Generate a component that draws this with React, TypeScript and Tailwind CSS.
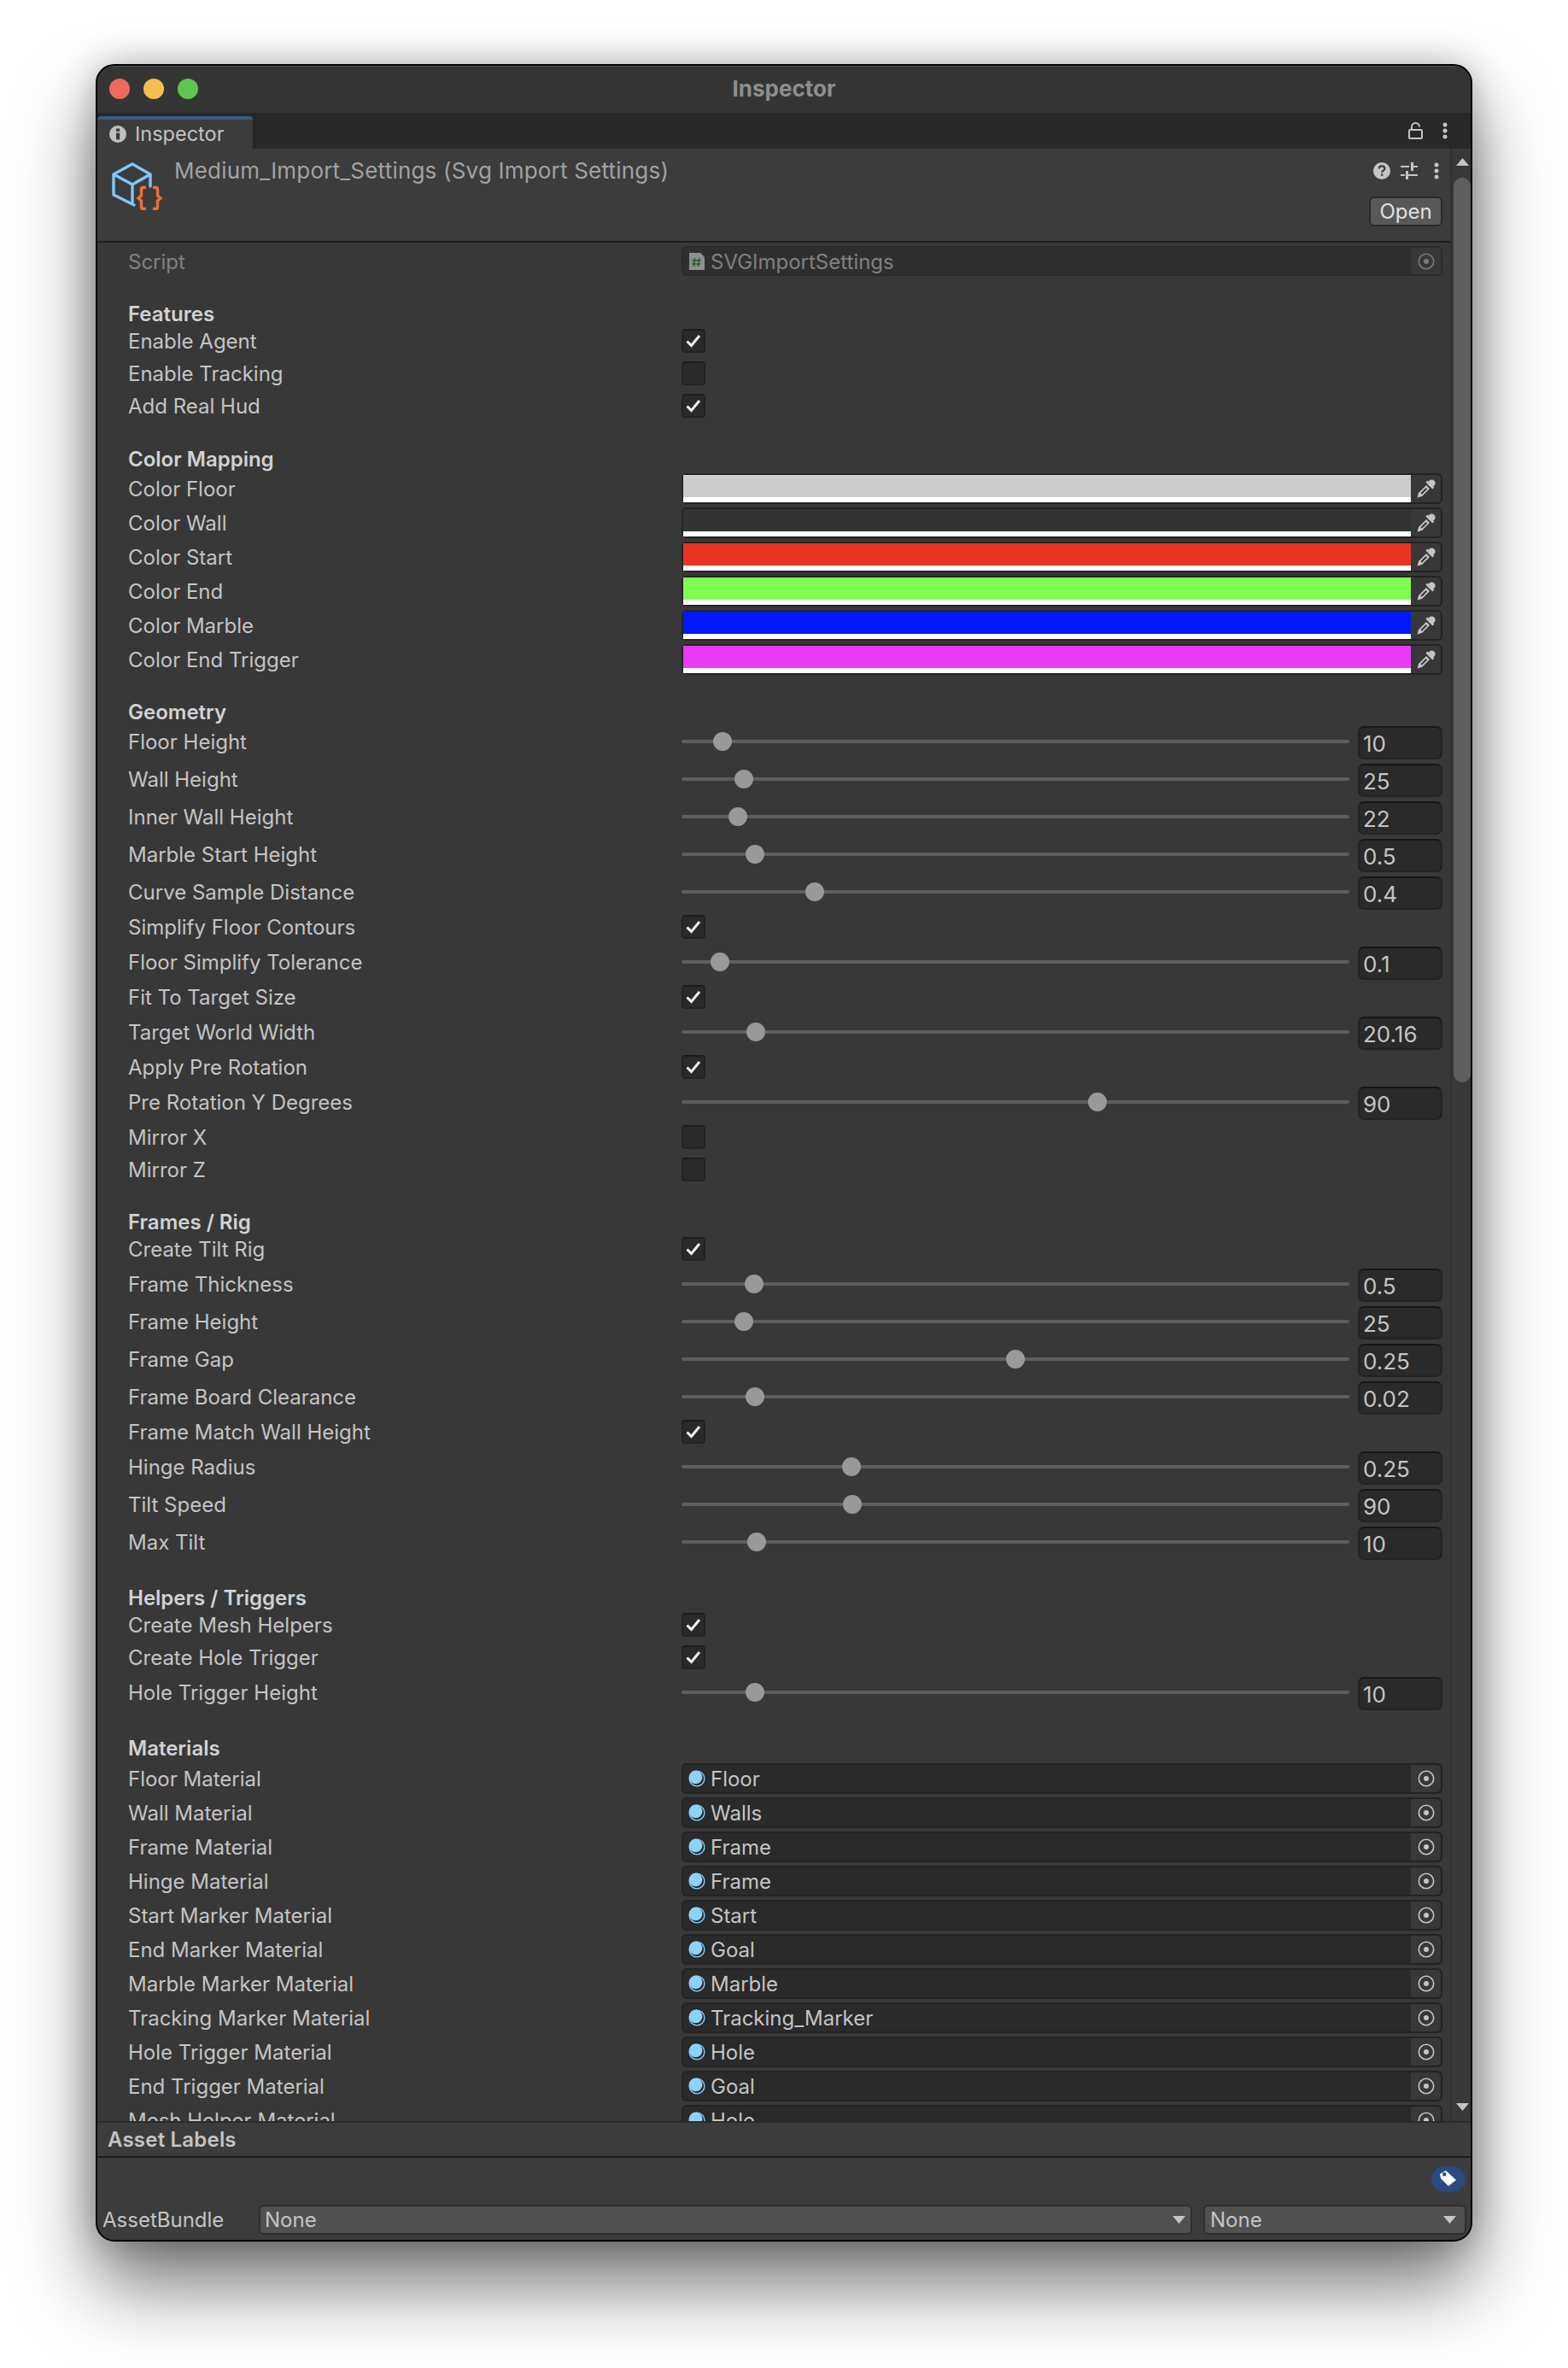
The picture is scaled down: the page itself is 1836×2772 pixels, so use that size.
import React from 'react';

type Row =
  | { kind: 'check'; label: string; on: boolean }
  | { kind: 'color'; label: string; color: string }
  | { kind: 'slider'; label: string; value: string; pos: number }
  | { kind: 'object'; label: string; value: string };

type Section = { title: string; className: string; headClassName: string; rows: Row[] };

const sections: Section[] = [
  {
    title: 'Features',
    className: 'mt-[31px]',
    headClassName: 'mb-0',
    rows: [
      { kind: 'check', label: 'Enable Agent', on: true },
      { kind: 'check', label: 'Enable Tracking', on: false },
      { kind: 'check', label: 'Add Real Hud', on: true },
    ],
  },
  {
    title: 'Color Mapping',
    className: 'mt-[30px]',
    headClassName: 'mb-[2px]',
    rows: [
      { kind: 'color', label: 'Color Floor', color: '#cbcbcb' },
      { kind: 'color', label: 'Color Wall', color: '#333333' },
      { kind: 'color', label: 'Color Start', color: '#e93323' },
      { kind: 'color', label: 'Color End', color: '#7efc4f' },
      { kind: 'color', label: 'Color Marble', color: '#0419fb' },
      { kind: 'color', label: 'Color End Trigger', color: '#e93af6' },
    ],
  },
  {
    title: 'Geometry',
    className: 'mt-[28px]',
    headClassName: 'mb-0',
    rows: [
      { kind: 'slider', label: 'Floor Height', value: '10', pos: 48 },
      { kind: 'slider', label: 'Wall Height', value: '25', pos: 73 },
      { kind: 'slider', label: 'Inner Wall Height', value: '22', pos: 66 },
      { kind: 'slider', label: 'Marble Start Height', value: '0.5', pos: 86 },
      { kind: 'slider', label: 'Curve Sample Distance', value: '0.4', pos: 156 },
      { kind: 'check', label: 'Simplify Floor Contours', on: true },
      { kind: 'slider', label: 'Floor Simplify Tolerance', value: '0.1', pos: 45 },
      { kind: 'check', label: 'Fit To Target Size', on: true },
      { kind: 'slider', label: 'Target World Width', value: '20.16', pos: 87 },
      { kind: 'check', label: 'Apply Pre Rotation', on: true },
      { kind: 'slider', label: 'Pre Rotation Y Degrees', value: '90', pos: 487 },
      { kind: 'check', label: 'Mirror X', on: false },
      { kind: 'check', label: 'Mirror Z', on: false },
    ],
  },
  {
    title: 'Frames / Rig',
    className: 'mt-[29px]',
    headClassName: 'mb-0',
    rows: [
      { kind: 'check', label: 'Create Tilt Rig', on: true },
      { kind: 'slider', label: 'Frame Thickness', value: '0.5', pos: 85 },
      { kind: 'slider', label: 'Frame Height', value: '25', pos: 73 },
      { kind: 'slider', label: 'Frame Gap', value: '0.25', pos: 391 },
      { kind: 'slider', label: 'Frame Board Clearance', value: '0.02', pos: 86 },
      { kind: 'check', label: 'Frame Match Wall Height', on: true },
      { kind: 'slider', label: 'Hinge Radius', value: '0.25', pos: 199 },
      { kind: 'slider', label: 'Tilt Speed', value: '90', pos: 200 },
      { kind: 'slider', label: 'Max Tilt', value: '10', pos: 88 },
    ],
  },
  {
    title: 'Helpers / Triggers',
    className: 'mt-[30px]',
    headClassName: 'mb-0',
    rows: [
      { kind: 'check', label: 'Create Mesh Helpers', on: true },
      { kind: 'check', label: 'Create Hole Trigger', on: true },
      { kind: 'slider', label: 'Hole Trigger Height', value: '10', pos: 86 },
    ],
  },
  {
    title: 'Materials',
    className: 'mt-[30px]',
    headClassName: 'mb-[3px]',
    rows: [
      { kind: 'object', label: 'Floor Material', value: 'Floor' },
      { kind: 'object', label: 'Wall Material', value: 'Walls' },
      { kind: 'object', label: 'Frame Material', value: 'Frame' },
      { kind: 'object', label: 'Hinge Material', value: 'Frame' },
      { kind: 'object', label: 'Start Marker Material', value: 'Start' },
      { kind: 'object', label: 'End Marker Material', value: 'Goal' },
      { kind: 'object', label: 'Marble Marker Material', value: 'Marble' },
      { kind: 'object', label: 'Tracking Marker Material', value: 'Tracking_Marker' },
      { kind: 'object', label: 'Hole Trigger Material', value: 'Hole' },
      { kind: 'object', label: 'End Trigger Material', value: 'Goal' },
      { kind: 'object', label: 'Mesh Helper Material', value: 'Hole' },
    ],
  },
];

const Dots = () => (
  <svg width="8" height="20" viewBox="0 0 8 20" fill="#c4c4c4">
    <circle cx="4" cy="3" r="2.5" />
    <circle cx="4" cy="10" r="2.5" />
    <circle cx="4" cy="17" r="2.5" />
  </svg>
);

const Target = ({ dim }: { dim?: boolean }) => (
  <svg width="20" height="20" viewBox="0 0 20 20" fill="none">
    <circle cx="10" cy="10" r="8.7" stroke={dim ? '#7a7a7a' : '#c4c4c4'} strokeWidth="1.6" />
    <circle cx="10" cy="10" r="3" fill={dim ? '#7a7a7a' : '#c4c4c4'} />
  </svg>
);

const MaterialIcon = () => (
  <svg width="20" height="20" viewBox="0 0 20 20" fill="none" className="shrink-0">
    <circle cx="10" cy="10" r="8.9" stroke="#8bd2ff" strokeWidth="1.3" />
    <circle cx="8.6" cy="8.4" r="7.8" fill="#8bd2ff" />
  </svg>
);

const Eyedropper = () => (
  <svg width="22" height="22" viewBox="0 0 22 22" fill="#c4c4c4">
    <circle cx="17.4" cy="4.6" r="4.2" />
    <path d="M10.4 3.6 12.4 1.6 20.4 9.6 18.4 11.6Z" />
    <path
      d="M11 7 15 11 6 20 .6 21.6 2 16ZM10.6 10 4.4 16.2 5.9 17.7 12.1 11.5Z"
      fillRule="evenodd"
    />
  </svg>
);

const Caret = () => (
  <svg width="15" height="9" viewBox="0 0 15 9" fill="#c4c4c4">
    <path d="M0 0h15L7.5 9Z" />
  </svg>
);

function Field({ row }: { row: Row }) {
  if (row.kind === 'check') {
    return (
      <div className="flex h-[28px] w-[28px] items-center justify-center rounded-[4px] border-2 border-[#232323] border-t-[#1c1c1c] bg-[#2a2a2a]">
        {row.on && (
          <svg width="18" height="16" viewBox="0 0 18 16" fill="none">
            <path d="M1.5 8.5 6.5 13.5 16 2" stroke="#f0f0f0" strokeWidth="3" />
          </svg>
        )}
      </div>
    );
  }
  if (row.kind === 'color') {
    return (
      <div className="flex h-[36px] items-stretch rounded-[6px] border-2 border-[#232323] bg-[#383838]">
        <div className="flex w-[852px] flex-col">
          <div className="h-[26px]" style={{ backgroundColor: row.color }} />
          <div className="h-[6px] bg-white" />
        </div>
        <div className="flex flex-1 items-center justify-center pl-[1px]">
          <Eyedropper />
        </div>
      </div>
    );
  }
  if (row.kind === 'slider') {
    return (
      <div className="flex items-center">
        <div className="relative h-[4px] w-[782px] rounded-full bg-[#5e5e5e]">
          <div
            className="absolute top-[-9px] h-[22px] w-[22px] -translate-x-1/2 rounded-full bg-[#999999]"
            style={{ left: row.pos }}
          />
        </div>
        <div className="mt-[2px] ml-[10px] flex h-[39px] w-[99px] items-center rounded-[7px] border-2 border-[#232323] border-t-[#171717] bg-[#2a2a2a] pt-[3px] pl-[4px] text-[26px]">
          {row.value}
        </div>
      </div>
    );
  }
  return (
    <div className="flex h-[36px] items-stretch rounded-[6px] border-2 border-[#232323] bg-[#2a2a2a]">
      <div className="flex flex-1 items-center gap-[6px] pl-[6px]">
        <MaterialIcon />
        <span className="pt-[2px]">{row.value}</span>
      </div>
      <div className="flex w-[35px] items-center justify-center rounded-r-[5px] bg-[#383838]">
        <Target />
      </div>
    </div>
  );
}

export default function App() {
  return (
    <div className="h-[2772px] w-[1836px] bg-white pt-[75px] pl-[112px] font-['Inter',sans-serif] text-[24px] leading-none text-[#c4c4c4]">
      <div className="flex h-[2549px] w-[1612px] flex-col overflow-hidden rounded-[22px] border-2 border-black bg-[#383838] shadow-[0_50px_90px_rgba(0,0,0,0.55),0_0_40px_rgba(0,0,0,0.25)]">
        {/* Title bar */}
        <div className="relative flex h-[55px] shrink-0 items-center justify-center border-t border-[#555555] bg-[#353535] pb-[3px]">
          <div className="absolute top-[14px] left-[14px] flex gap-[16px]">
            <div className="h-[24px] w-[24px] rounded-full bg-[#ec6a5e]" />
            <div className="h-[24px] w-[24px] rounded-full bg-[#f4bf4f]" />
            <div className="h-[24px] w-[24px] rounded-full bg-[#61c554]" />
          </div>
          <span className="text-[26px] font-bold text-[#8e8e8e]">Inspector</span>
        </div>

        {/* Tab strip */}
        <div className="flex h-[42px] shrink-0 items-stretch justify-between bg-[#282828]">
          <div className="mt-[4px] flex w-[182px] items-center gap-[10px] rounded-t-[4px] border-t-4 border-[#3a5a85] bg-[#3c3c3c] pl-[14px] text-[23.5px]">
            <svg width="20" height="20" viewBox="0 0 20 20">
              <circle cx="10" cy="10" r="10" fill="#c0c0c0" />
              <rect x="8" y="8.5" width="4.2" height="8" fill="#3c3c3c" />
              <rect x="8" y="3.5" width="4.2" height="3.4" fill="#3c3c3c" />
            </svg>
            <span>Inspector</span>
          </div>
          <div className="flex items-center gap-[21px] pr-[26px]">
            <svg width="18" height="20" viewBox="0 0 18 20" fill="none" stroke="#c4c4c4" strokeWidth="2">
              <rect x="1" y="9" width="15" height="10" rx="1" />
              <path d="M4 9V5.5a4.5 4.5 0 0 1 9 0" />
            </svg>
            <Dots />
          </div>
        </div>

        <div className="flex min-h-0 flex-1">
          {/* Scrolling inspector */}
          <div className="flex min-w-0 flex-1 flex-col overflow-hidden">
            <div className="relative h-[110px] shrink-0 border-b-2 border-[#1f1f1f] bg-[#3c3c3c]">
              <svg width="60" height="56" viewBox="0 0 60 56" fill="none" className="absolute top-[16px] left-[17px]">
                <path
                  d="M24 2 45 14V28M24 2 2 14V38L26 50M2 14 24 26 45 14M24 26V47"
                  stroke="#7fc8f8"
                  strokeWidth="3.4"
                  strokeLinejoin="round"
                  strokeLinecap="round"
                />
                <path
                  d="M40 29.5H37Q34.5 29.5 34.5 32V39L31 42 34.5 45V52Q34.5 54.5 37 54.5H40M48 29.5H51Q53.5 29.5 53.5 32V39L57 42 53.5 45V52Q53.5 54.5 51 54.5H48"
                  stroke="#ee6f3a"
                  strokeWidth="3.4"
                />
              </svg>
              <div className="absolute top-[13px] left-[90px] text-[26px] tracking-[0.2px] text-[#a2a2a2]">
                Medium_Import_Settings (Svg Import Settings)
              </div>
              <div className="absolute top-[16px] left-[1494px] flex items-center gap-[12px]">
                <svg width="20" height="20" viewBox="0 0 20 20">
                  <circle cx="10" cy="10" r="10" fill="#c4c4c4" />
                  <path
                    d="M6.7 7.6C6.7 5.5 8.2 4.4 10 4.4 11.9 4.4 13.3 5.5 13.3 7.2 13.3 9.6 10.2 9.6 10.2 12"
                    stroke="#3c3c3c"
                    strokeWidth="2.2"
                    fill="none"
                  />
                  <rect x="9" y="13.4" width="2.4" height="2.4" fill="#3c3c3c" />
                </svg>
                <svg width="20" height="20" viewBox="0 0 20 20" fill="#c4c4c4">
                  <rect x="0" y="4" width="10" height="2" />
                  <rect x="12" y="0" width="3" height="10" />
                  <rect x="15" y="4" width="5" height="2" />
                  <rect x="0" y="14" width="5" height="2" />
                  <rect x="6" y="10" width="3" height="10" />
                  <rect x="9" y="14" width="11" height="2" />
                </svg>
                <span className="ml-[6px]">
                  <Dots />
                </span>
              </div>
              <div className="absolute top-[56px] left-[1489px] flex h-[35px] w-[86px] items-center justify-center rounded-[6px] border-2 border-[#2a2a2a] bg-[#585858] pt-[1px] text-[#e0e0e0]">
                Open
              </div>
            </div>

            <div className="min-h-0 flex-1 overflow-hidden pr-[9px] pl-[36px]">
              {/* Script row */}
              <div className="mt-[4px] flex h-[35px] items-center text-[#808080]">
                <div className="w-[648px] pt-[2px]">Script</div>
                <div className="flex h-full flex-1 items-stretch rounded-[6px] border-2 border-[#2b2b2b] bg-[#2f2f2f]">
                  <div className="flex flex-1 items-center gap-[6px] pl-[6px]">
                    <svg width="20" height="20" viewBox="0 0 20 20">
                      <path d="M1 0h13l5 5v15H1Z" fill="#8f8f8f" />
                      <path d="M7.5 6 6.5 16M12.5 6 11.5 16M4.5 9H15M4 13H14.5" stroke="#2c5a2c" strokeWidth="1.6" />
                    </svg>
                    <span className="pt-[2px]">SVGImportSettings</span>
                  </div>
                  <div className="flex w-[35px] items-center justify-center bg-[#383838]">
                    <Target dim />
                  </div>
                </div>
              </div>

              {sections.map((s) => (
                <div key={s.title} className={s.className}>
                  <div className={`flex h-[26px] items-center pt-[1px] font-semibold text-[#d2d2d2] ${s.headClassName}`}>
                    {s.title}
                  </div>
                  {s.rows.map((r) => (
                    <div
                      key={r.label}
                      className={
                        r.kind === 'slider'
                          ? 'flex h-[44px] items-center'
                          : r.kind === 'check'
                            ? 'flex h-[38px] items-center'
                            : 'flex h-[40px] items-center'
                      }
                    >
                      <div className="w-[648px] shrink-0 pt-[2px]">{r.label}</div>
                      <div className="min-w-0 flex-1">
                        <Field row={r} />
                      </div>
                    </div>
                  ))}
                </div>
              ))}
            </div>
          </div>

          {/* Scrollbar */}
          <div className="flex w-[24px] shrink-0 flex-col items-center border-l-2 border-[#303030] bg-[#383838] pt-[11px] pb-[12px] pl-[2px]">
            <svg width="15" height="9" viewBox="0 0 15 9" fill="#c4c4c4">
              <path d="M7.5 0 15 9H0Z" />
            </svg>
            <div className="mt-[14px] h-[1059px] w-[20px] rounded-[10px] bg-[#5f5f5f]" />
            <div className="mt-auto">
              <Caret />
            </div>
          </div>
        </div>

        {/* Asset labels */}
        <div className="shrink-0 bg-[#3c3c3c] pb-[6px]">
          <div className="flex h-[43px] items-center border-y-2 border-t-[#2c2c2c] border-b-[#1f1f1f] pl-[12px] font-semibold tracking-[0.2px]">
            Asset Labels
          </div>
          <div className="flex h-[40px] items-center justify-end pt-[10px] pr-[6px]">
            <div className="flex h-[30px] w-[40px] items-center justify-center rounded-full bg-[#2b4a7f]">
              <svg width="20" height="20" viewBox="0 0 20 20">
                <path d="M0 4 7 0 19 11 10 18 1 9Z" fill="#fff" />
                <rect x="3.3" y="2.3" width="4" height="4" fill="#2b4a7f" />
              </svg>
            </div>
          </div>
          <div className="mt-[15px] flex h-[35px] items-center pr-[5px] pl-[6px]">
            <div className="w-[183px] shrink-0">AssetBundle</div>
            <div className="flex h-full w-[1093px] items-center justify-between rounded-[6px] border-2 border-[#2f2f2f] bg-[#515151] pr-[6px] pl-[5px]">
              None
              <Caret />
            </div>
            <div className="ml-[13px] flex h-full flex-1 items-center justify-between rounded-[6px] border-2 border-[#2f2f2f] bg-[#515151] pr-[10px] pl-[6px]">
              None
              <Caret />
            </div>
          </div>
        </div>
      </div>
    </div>
  );
}
